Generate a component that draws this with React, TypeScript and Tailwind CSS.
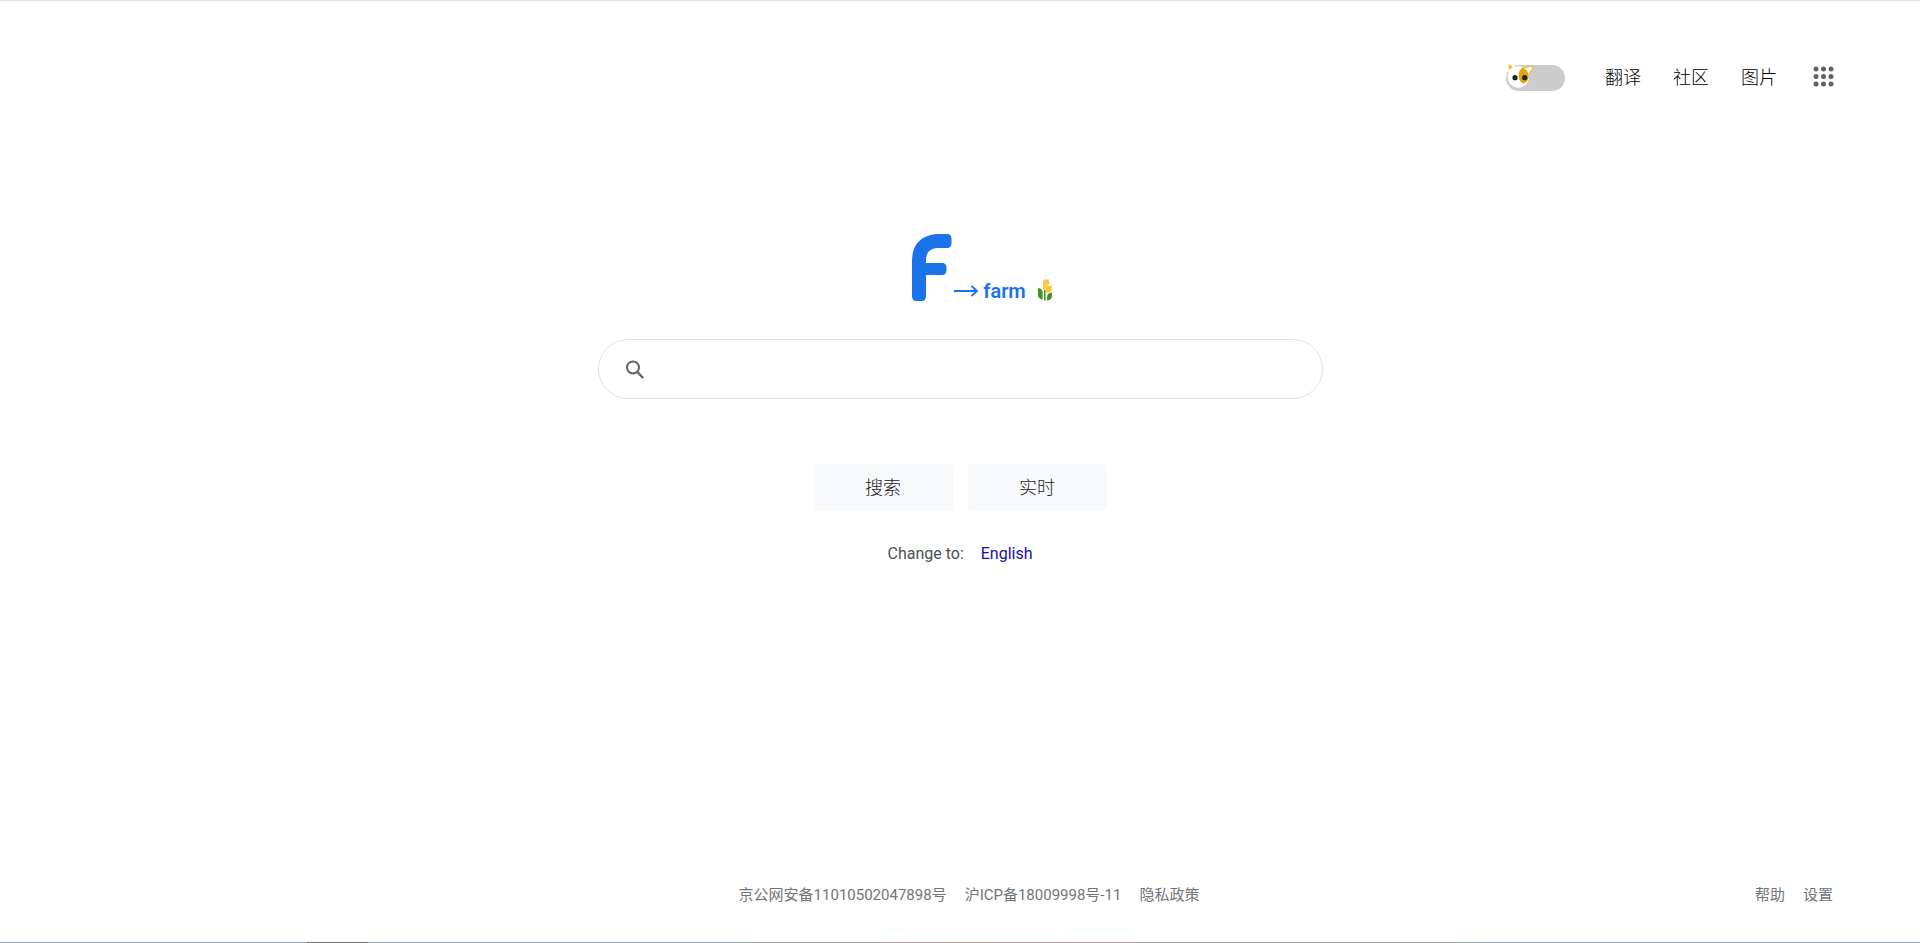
import { useState } from "react";

const NAV_LINKS = ["翻译", "社区", "图片"];
const LEGAL_LINKS = ["京公网安备11010502047898号", "沪ICP备18009998号-11", "隐私政策"];
const HELP_LINKS = ["帮助", "设置"];
const DOTS = [3, 10.5, 18];

function CatToggle() {
  const [on, setOn] = useState(false);

  return (
    <label className="relative block h-[26px] w-[59px] cursor-pointer rounded-full bg-[#ccc]">
      <input
        type="checkbox"
        role="switch"
        aria-label="主题"
        checked={on}
        onChange={(e) => setOn(e.target.checked)}
        className="peer absolute inset-0 size-full cursor-pointer appearance-none rounded-full"
      />
      <svg
        viewBox="0 0 28 28"
        className="pointer-events-none absolute -top-[3px] left-0 size-7 transition-transform peer-checked:translate-x-8"
      >
        <path
          d="M1.600 2C1.300 1 2.200.6 3 1.200l5 4-5.400 4.300z"
          fill="#fbb30f"
          stroke="#fff"
          strokeWidth="1.600"
          strokeLinejoin="round"
        />
        <path
          d="M16.500 6.200l8.400-1.700c1.500-.2 2.100.6 1.600 1.900-.8 2.200-2 4-4.200 6z"
          fill="#fff"
          stroke="#fbb92c"
          strokeWidth="1.200"
          strokeLinejoin="round"
        />
        <circle cx="12.300" cy="15" r="10.700" fill="#fff" />
        <path
          d="M16.500 5.200C13.300 8.200 12 11.600 12.800 15.500c.6 3 2 5.200 4.700 6.300 3.600-1.600 5.300-4.600 5.200-7.800C22.500 10 20 7 16.500 5.200z"
          fill="#e5a50f"
        />
        <circle cx="9" cy="15.700" r="2.600" fill="#222" />
        <circle cx="18.700" cy="15.700" r="2.600" fill="#222" />
      </svg>
    </label>
  );
}

function Logo() {
  return (
    <h1 className="flex items-end pl-11 text-[#1a73e8]">
      <svg viewBox="0 0 40 67" className="h-[67px] w-10" role="img" aria-label="F">
        <path
          d="M0 62V28C0 10 9 0 29 0h6c3 0 4.500 1.500 4.500 4.500V9c0 3-1.500 5-4.500 5h-8c-9 0-13 4-13 13v2h16c3 0 4.500 1.500 4.500 4.500V36c0 3-1.500 5-4.500 5H14v21c0 3-1.500 5-4.500 5h-5C1.500 67 0 65 0 62z"
          fill="currentColor"
        />
      </svg>
      <svg viewBox="0 0 25 12" className="mb-1 ml-[2px] h-3 w-[25px]" aria-hidden="true">
        <path d="M0 6h23M17.500 1l5.500 5-5.500 5" fill="none" stroke="currentColor" strokeWidth="1.8" />
      </svg>
      <span className="ml-1 text-xl leading-5 font-semibold">farm</span>
      <svg viewBox="0 0 14 22" className="ml-3 h-[22px] w-[14px]" aria-hidden="true">
        <path d="M5 7V3c0-1.600.9-2.500 2.300-2.500h4.200c0 1.500-.7 2.300-2 2.500h2c0 2-1 3-3 3.300h1.700L8 8v2.500H5z" fill="#fdc94b" />
        <path d="M8 13.500V9c0-1.500.8-2.300 2.500-2.300H14c0 1.500-.8 2.300-2.300 2.600H14c0 2.700-1.500 4.200-4 4.200z" fill="#fdc133" />
        <path d="M0 9c3.200.4 4.600 1.800 4.600 4.500v7.200C1.500 20 0 18.500 0 15.500zM14 13.500v3c0 3-1.600 4.600-4.900 5.200v-4c0-2.500 1.900-4 4.900-4.200zM6 11h1.500v10.500H6z" fill="#3f9420" />
      </svg>
    </h1>
  );
}

function AppsIcon() {
  return (
    <svg viewBox="0 0 21 21" className="size-[21px]" aria-hidden="true">
      {DOTS.map((y) =>
        DOTS.map((x) => <circle key={`${x}-${y}`} cx={x} cy={y} r="2.500" fill="#5f6368" />),
      )}
    </svg>
  );
}

export default function App() {
  return (
    <div className="flex min-h-screen flex-col border-t border-[#dadce0] bg-white font-['Roboto','Noto_Sans_CJK_SC',sans-serif]">
      <header className="flex items-center justify-end pt-16 pr-[86px]">
        <CatToggle />
        <nav className="ml-10 flex gap-8 text-lg leading-[26px] font-light text-black">
          {NAV_LINKS.map((text) => (
            <a key={text} href="#">
              {text}
            </a>
          ))}
        </nav>
        <button type="button" aria-label="应用" className="mb-1 ml-9">
          <AppsIcon />
        </button>
      </header>

      <main className="flex flex-1 flex-col items-center pt-[143px]">
        <Logo />

        <form
          id="search"
          onSubmit={(e) => e.preventDefault()}
          className="mt-[38px] flex h-[60px] w-full max-w-[725px] items-center rounded-full border border-[#dfe1e5] px-[27px]"
        >
          <svg viewBox="0 0 18 19" className="h-[19px] w-[18px] shrink-0" aria-hidden="true">
            <circle cx="7" cy="7.500" r="6" fill="none" stroke="#5f6368" strokeWidth="2" />
            <path d="M11.500 12l5.500 6" stroke="#5f6368" strokeWidth="2.300" />
          </svg>
          <input type="text" aria-label="搜索" className="ml-4 h-10 flex-1 text-lg outline-none" />
        </form>

        <div className="mt-[65px] flex gap-[15px] text-lg font-light text-[#202124]">
          <button type="submit" form="search" className="h-[47px] w-[139px] rounded bg-[#f8f9fa]">
            搜索
          </button>
          <button type="button" className="h-[47px] w-[139px] rounded bg-[#f8f9fa]">
            实时
          </button>
        </div>

        <p className="mt-[31px] flex gap-[17px] text-base text-[#4d5156]">
          Change to:
          <a href="#" className="text-[#1a0dab]">
            English
          </a>
        </p>
      </main>

      <footer className="grid grid-cols-[1fr_auto_1fr] pr-[87px] pb-[35px] pl-[87px] text-[15px] leading-6 text-[#70757a]">
        <nav className="col-start-2 flex">
          {LEGAL_LINKS.map((text) => (
            <a key={text} href="#" className="ml-[18px]">
              {text}
            </a>
          ))}
        </nav>
        <nav className="flex justify-end">
          {HELP_LINKS.map((text) => (
            <a key={text} href="#" className="ml-[18px]">
              {text}
            </a>
          ))}
        </nav>
      </footer>

      <div className="flex h-px bg-linear-to-r from-[#9ba8af] from-38% via-[#b5a09b] via-50% to-[#9ba8af] to-78%">
        <span className="ml-[16%] w-[61px] bg-[#77727a]" />
      </div>
    </div>
  );
}
